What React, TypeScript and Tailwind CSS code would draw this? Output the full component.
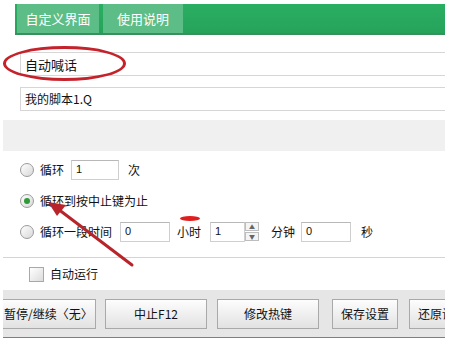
import React from 'react';

function Radio({ checked }: { checked?: boolean }) {
  return (
    <span className="w-[14px] h-[14px] rounded-full border border-[#9a9a9a] bg-gradient-to-br from-[#ffffff] to-[#d8d8d8] flex items-center justify-center shrink-0">
      {checked && <span className="w-[6px] h-[6px] rounded-full bg-[#2f9a3a]" />}
    </span>
  );
}

function Field({ value, w }: { value: string; w: string }) {
  return (
    <span className={`${w} h-[20px] border border-[#cfcfcf] border-t-[#b8b8b8] bg-white flex items-center pl-[4px] text-[11px] font-['Liberation_Sans'] shrink-0`}>
      {value}
    </span>
  );
}

function Btn({ label, className }: { label: string; className: string }) {
  return (
    <div
      className={`h-[30px] border border-[#a9a9a9] bg-gradient-to-b from-[#fdfdfd] to-[#e2e2e2] flex items-center shrink-0 ${className}`}
    >
      {label}
    </div>
  );
}

export default function App() {
  return (
    <div className="w-[452px] h-[358px] bg-white overflow-hidden relative text-[12px] text-[#111] font-['Noto_Sans_CJK_SC',sans-serif] leading-none">
      <div className="w-[445px] pt-[4px]">
        {/* tab strip */}
        <div className="ml-[15px] h-[31px] bg-gradient-to-b from-[#2aae62] to-[#26a35b] border-b-[2px] border-[#3b8f5e] flex pl-[2px] gap-[4px]">
          <div className="w-[82px] bg-[#5dbd86] text-white text-[13px] flex items-center justify-center">自定义界面</div>
          <div className="w-[80px] bg-[#5dbd86] text-white text-[13px] flex items-center justify-center">使用说明</div>
        </div>

        {/* name fields */}
        <div className="ml-[20px] mt-[17px] h-[24px] border-y border-l border-[#d6d6d6] flex items-center pl-[4px] text-[13px]">
          自动喊话
        </div>
        <div className="ml-[20px] mt-[11px] h-[24px] border-y border-l border-[#d6d6d6] flex items-center pl-[4px] text-[12px]">
          我的脚本1.Q
        </div>

        <div className="ml-[3px] mt-[9px] h-[31px] bg-[#f0f0f0]" />

        {/* loop options */}
        <div className="mt-[3px] pl-[20px]">
          <div className="h-[31px] flex items-center">
            <Radio />
            <span className="ml-[6px]">循环</span>
            <span className="ml-[7px]">
              <Field value="1" w="w-[48px]" />
            </span>
            <span className="ml-[9px]">次</span>
          </div>
          <div className="h-[31px] flex items-center">
            <Radio checked />
            <span className="ml-[6px]">循环到按中止键为止</span>
          </div>
          <div className="h-[31px] flex items-center">
            <Radio />
            <span className="ml-[6px]">循环一段时间</span>
            <span className="ml-[8px]">
              <Field value="0" w="w-[50px]" />
            </span>
            <span className="ml-[7px]">小时</span>
            <span className="ml-[9px] flex items-center">
              <Field value="1" w="w-[35px]" />
              <span className="w-[14px] h-[20px] flex flex-col justify-center gap-[1px]">
                <span className="h-[9px] border border-[#bdbdbd] bg-[#f4f4f4] flex items-center justify-center text-[6px] text-[#666]">▲</span>
                <span className="h-[9px] border border-[#bdbdbd] bg-[#f4f4f4] flex items-center justify-center text-[6px] text-[#666]">▼</span>
              </span>
            </span>
            <span className="ml-[12px]">分钟</span>
            <span className="ml-[6px]">
              <Field value="0" w="w-[50px]" />
            </span>
            <span className="ml-[10px]">秒</span>
          </div>
        </div>

        <div className="ml-[3px] mt-[10px] h-px bg-[#d4d4d4]" />

        <div className="h-[32px] flex items-center pl-[29px]">
          <span className="w-[15px] h-[15px] border border-[#a8a8a8] bg-gradient-to-br from-[#ffffff] to-[#dcdcdc]" />
          <span className="ml-[6px]">自动运行</span>
        </div>

        {/* button bar */}
        <div className="ml-[3px] h-[48px] bg-[#e6e6e6] border-b border-[#4f9a70] flex items-center overflow-hidden">
          <Btn label="暂停/继续〈无〉" className="ml-[-6px] w-[99px] pl-[6px]" />
          <Btn label="中止F12" className="ml-[9px] w-[102px] justify-center" />
          <Btn label="修改热键" className="ml-[10px] w-[102px] justify-center" />
          <Btn label="保存设置" className="ml-[13px] w-[66px] justify-center" />
          <Btn label="还原设置" className="ml-[11px] w-[66px] justify-center" />
        </div>
      </div>

      {/* annotations drawn over the screenshot */}
      <div className="absolute left-[3px] top-[46px] w-[123px] h-[35px] rounded-[50%] border-[3px] border-[#c4232b]" />
      <div className="absolute left-[180px] top-[216px] w-[20px] h-[5px] rounded-[50%] bg-[#e01e1e]" />
      <svg className="absolute left-0 top-0" width="452" height="358" viewBox="0 0 452 358">
        <line x1="132" y1="265" x2="58" y2="209" stroke="#b8242a" strokeWidth="3" strokeLinecap="round" />
        <polygon points="48,202 66,205 57,216" fill="#b8242a" />
      </svg>
    </div>
  );
}
